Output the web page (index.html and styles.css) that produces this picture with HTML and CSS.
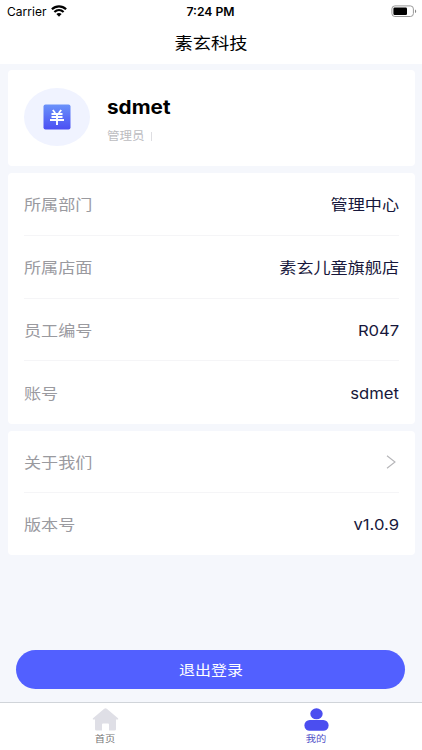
FILE: index.html
```
<!DOCTYPE html>
<html lang="zh-CN">
<head>
<meta charset="utf-8">
<title>素玄科技</title>
<link rel="stylesheet" href="styles.css">
</head>
<body>
<div class="app">
  <header class="top">
    <div class="status">
      <div class="carrier"><span>Carrier</span>
        <svg width="16" height="12" viewBox="0 0 16 12" fill="none" stroke="#000" stroke-width="2.2"><path d="M.9 4.300C5 .3 11 .3 15.100 4.300M3.400 7c2.700-2.500 6.500-2.500 9.200 0"/><path d="M5.400 9.100c1.500-1.400 3.700-1.400 5.200 0L8 11.700z" fill="#000" stroke="none"/></svg>
      </div>
      <div class="time">7:24 PM</div>
      <div class="battery">
        <svg width="26" height="13" viewBox="0 0 26 13"><rect x=".9" y=".9" width="21.5" height="10.6" rx="3" fill="#fff" stroke="#999"/><rect x="2.4" y="2.5" width="13.6" height="7.4" rx="1.2"/><path d="M24 4.4c1.6.7 1.6 3 0 3.7z" fill="#888"/></svg>
      </div>
    </div>
    <h1 class="title"><span class="wide">素玄科技</span></h1>
  </header>
  <main class="content">
    <section class="card profile">
      <div class="avatar">
        <svg width="28" height="26" viewBox="0 0 28 26"><defs><linearGradient id="g" x1="0" y1="0" x2="0" y2="1"><stop offset="0" stop-color="#6a92fa"/><stop offset="1" stop-color="#4c4ff3"/></linearGradient></defs><rect x=".5" y=".5" width="27" height="25" rx="2" fill="url(#g)"/><path d="M9.800 6l2.400 3M18.200 6l-2.400 3M8.500 10h11M8.500 13h11M7 16h14M14 10v11" fill="none" stroke="#fff" stroke-width="1.900"/></svg>
      </div>
      <div class="who">
        <div class="name"><span class="wide">sdmet</span></div>
        <div class="role"><span class="wide">管理员</span><i class="bar"></i></div>
      </div>
    </section>
    <section class="card list">
      <div class="row"><span class="label wide">所属部门</span><span class="value wide">管理中心</span></div>
      <div class="row"><span class="label wide">所属店面</span><span class="value wide">素玄儿童旗舰店</span></div>
      <div class="row"><span class="label wide">员工编号</span><span class="value latin wide">R047</span></div>
      <div class="row"><span class="label wide">账号</span><span class="value latin wide">sdmet</span></div>
    </section>
    <section class="card list about">
      <div class="row"><span class="label wide">关于我们</span>
        <svg class="chevron" width="12" height="14" viewBox="0 0 12 14" fill="none" stroke="#b5b5b8" stroke-width="1.1"><path d="M2 .8L10 7l-8 6.200"/></svg></div>
      <div class="row"><span class="label wide">版本号</span><span class="value latin wide">v1.0.9</span></div>
    </section>
    <button class="logout"><span class="wide">退出登录</span></button>
  </main>
  <nav class="tabs">
    <div class="tab">
      <svg width="27" height="23" viewBox="0 0 27 23"><path d="M12.2.7q1.3-.9 2.6 0L26 10.2q.8 1.2-.7 1.3H24v9.7q0 1.3-1.5 1.3H17v-6q0-1-1-1h-5q-1 0-1 1v6H4.500q-1.500 0-1.500-1.300v-9.700H1.700Q.2 11.400 1 10.200z" fill="#dfdfe6"/></svg>
      <span class="wide">首页</span>
    </div>
    <div class="tab active">
      <svg width="25" height="23" viewBox="0 0 25 23" fill="#4b4ef0"><ellipse cx="12.500" cy="5.800" rx="6.200" ry="5.500"/><rect x=".4" y="12" width="24.200" height="10.700" rx="5.300"/></svg>
      <span class="wide">我的</span>
    </div>
  </nav>
</div>
</body>
</html>
```
FILE: styles.css
```
* { box-sizing: border-box; }
body { margin: 0; font-family: Inter, "Noto Sans CJK SC", sans-serif; background: #f5f7fc; }
.app { width: 422px; height: 750px; display: flex; flex-direction: column; overflow: hidden; }
.wide { display: inline-block; transform: scaleX(1.14); white-space: nowrap; }

.top { height: 64px; background: #fff; }
.status { height: 22px; display: grid; grid-template-columns: 1fr 1fr 1fr; align-items: center; padding: 0 5px 0 7px; font-size: 12px; }
.carrier { display: flex; align-items: center; gap: 4px; }
.carrier span { letter-spacing: 0.05px; }
.time { text-align: center; font-weight: 600; font-size: 12.2px; margin-left: -3px; }
.battery { display: flex; justify-content: flex-end; }
.title { margin: 0; height: 42px; line-height: 42px; text-align: center; font-size: 16px; font-weight: 400; }

.content { flex: 1; padding: 6px 7px 0 8px; display: flex; flex-direction: column; }
.card { background: #fff; border-radius: 4px; flex: none; }
.profile { height: 96px; display: flex; padding: 18px 16px; }
.avatar { width: 66px; height: 58px; border-radius: 50%; background: #f0f3ff; display: flex; align-items: center; justify-content: center; }
.who { margin-left: 17px; display: flex; flex-direction: column; }
.who .wide { transform-origin: left; }
.name { height: 38px; line-height: 40px; font-size: 19px; font-weight: 700; }
.name .wide { transform: scaleX(1.09); }
.role { height: 20px; line-height: 20px; font-size: 11px; color: #bcbcbf; display: flex; align-items: center; }
.bar { width: 1px; height: 9px; background: #dedee2; margin-left: 11px; }

.list { margin-top: 7px; height: 251px; padding: 0 16px; display: flex; flex-direction: column; }
.about { height: 124px; }
.row { flex: 1; display: flex; align-items: center; justify-content: space-between; border-bottom: 1px solid #f5f5f7; font-size: 15px; }
.row:last-child { border-bottom-color: transparent; }
.label { color: #9a9a9f; transform-origin: left; }
.value { color: #17173b; transform-origin: right; }
.latin { padding-top: 2px; transform: scaleX(1.11); }
.chevron { margin-right: 2px; }

.logout { margin: 95px 3px 0 8px; width: 389px; height: 39px; border: 0; border-radius: 20px; background: #5260ff; color: #fff; font: 14px/39px Inter, "Noto Sans CJK SC", sans-serif; padding: 0; }

.tabs { height: 48px; background: #fff; border-top: 1px solid #d0d4d9; display: grid; grid-template-columns: 1fr 1fr; }
.tab { display: flex; flex-direction: column; align-items: center; padding-top: 5px; font-size: 9px; line-height: 13px; color: #777; }
.tab span { margin-top: 1px; }
.active { color: #5151c8; }
```
